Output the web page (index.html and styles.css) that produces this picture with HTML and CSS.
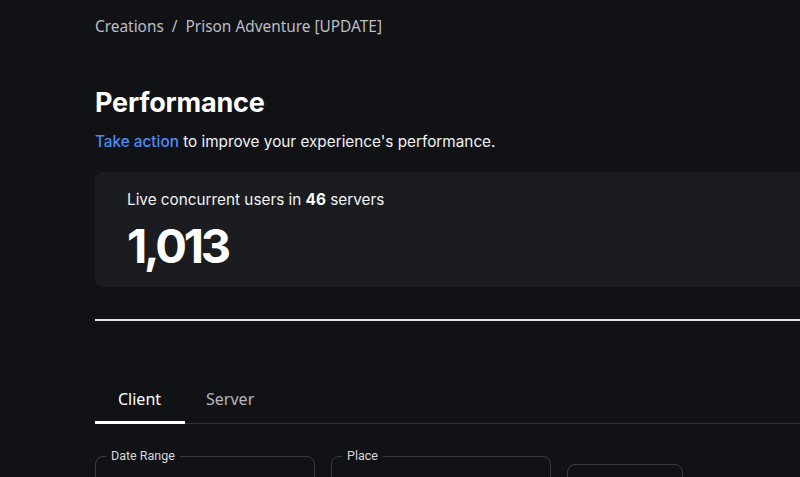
FILE: index.html
```html
<!DOCTYPE html>
<html lang="en">
<head>
<meta charset="utf-8">
<title>Performance</title>
<link rel="stylesheet" href="styles.css">
</head>
<body>
<main class="page">
  <nav class="crumbs">
    <span>Creations</span><span class="sep">/</span><span>Prison Adventure [UPDATE]</span>
  </nav>
  <h1 class="title">Performance</h1>
  <p class="subtitle"><a class="link" href="#">Take action</a> to improve your experience's performance.</p>
  <section class="card">
    <div class="card-label">Live concurrent users in <b>46</b> servers</div>
    <div class="card-value">1,013</div>
  </section>
  <hr class="divider">
  <div class="tabs">
    <div class="tab active">Client</div>
    <div class="tab">Server</div>
  </div>
  <div class="filters">
    <fieldset class="field w-date"><legend>Date Range</legend></fieldset>
    <fieldset class="field w-place"><legend>Place</legend></fieldset>
    <div class="field-plain"></div>
  </div>
</main>
</body>
</html>
```
FILE: styles.css
```css
html, body {
  margin: 0;
  padding: 0;
  background: #111216;
  overflow: hidden;
  height: 477px;
}
body {
  font-family: "Inter", "Noto Sans", sans-serif;
  color: #f2f3f5;
}
.page {
  width: 705px;
  padding-left: 95px;
  height: 477px;
  overflow: hidden;
}
.crumbs {
  display: flex;
  padding-top: 16px;
  font-family: "Noto Sans", "Inter", sans-serif;
  font-size: 15.4px;
  line-height: 22px;
  color: #bcbec4;
}
.crumbs .sep {
  margin: 0 8px;
}
.title {
  margin: 50px 0 0;
  font-size: 27px;
  line-height: 30px;
  font-weight: 700;
  color: #ffffff;
  letter-spacing: -0.2px;
}
.subtitle {
  margin: 13px 0 0;
  font-size: 15.3px;
  line-height: 22px;
  color: #f2f3f5;
}
.link {
  color: #4d8cf5;
  text-decoration: none;
  font-weight: 500;
}
.card {
  margin-top: 19px;
  margin-right: -40px;
  height: 115px;
  box-sizing: border-box;
  background: #1b1c20;
  border-radius: 8px;
  padding: 17px 32px 0;
}
.card-label {
  font-size: 15.3px;
  line-height: 22px;
  color: #f2f3f5;
}
.card-label b {
  font-weight: 700;
  color: #fff;
}
.card-value {
  margin-top: 7px;
  font-size: 47px;
  line-height: 56px;
  font-weight: 700;
  color: #ffffff;
  letter-spacing: -3.2px;
}
.divider {
  margin: 32px 0 0;
  border: 0;
  height: 2px;
  background: #e6e6e8;
}
.tabs {
  margin-top: 60px;
  display: flex;
  border-bottom: 1px solid #303136;
}
.tab {
  padding: 7px 23px 11px;
  font-family: "Noto Sans", sans-serif;
  font-size: 16px;
  line-height: 22px;
  color: #b5b7bd;
  border-bottom: 3px solid transparent;
  margin-bottom: -1px;
}
.tab.active {
  color: #ffffff;
  border-bottom-color: #ffffff;
  padding-right: 24px;
}
.tab + .tab {
  padding-left: 21px;
}
.filters {
  margin-top: 24px;
  display: flex;
  gap: 16px;
  align-items: flex-start;
}
.field {
  margin: 0;
  padding: 0 10px;
  height: 60px;
  border: 1px solid #3a3b40;
  border-radius: 8px;
  box-sizing: border-box;
  flex: none;
}
.field legend {
  padding: 0 5px;
  font-family: "Roboto", sans-serif;
  font-size: 12.5px;
  line-height: 16px;
  color: #d6d8dc;
}
.w-date { width: 220px; }
.w-place { width: 220px; }
.field-plain {
  flex: none;
  margin-top: 16px;
  width: 116px;
  height: 50px;
  border: 1px solid #3a3b40;
  border-radius: 8px;
  box-sizing: border-box;
}
```
